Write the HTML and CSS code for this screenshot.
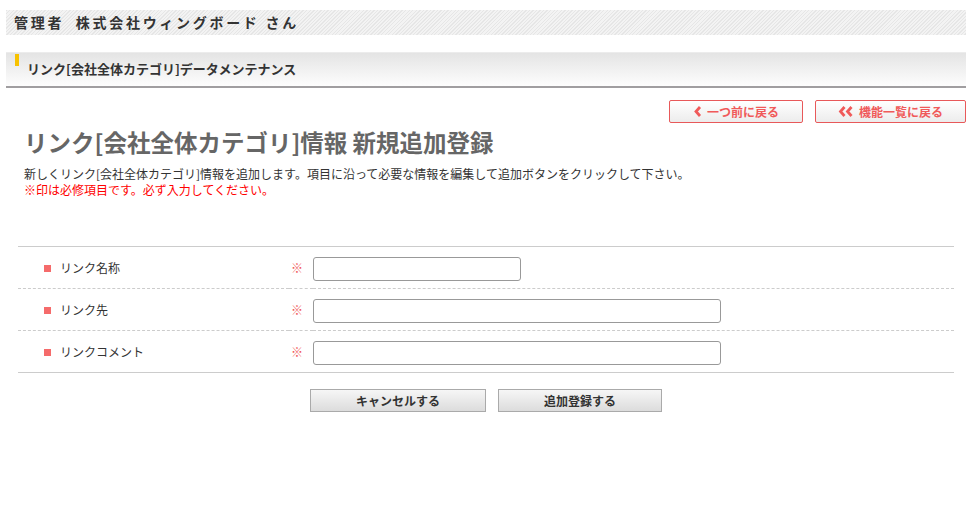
FILE: index.html
```html
<!DOCTYPE html>
<html lang="ja">
<head>
    <title>リンク[会社全体カテゴリ]情報 新規追加登録</title>
    <meta charset="UTF-8">
    <link rel="stylesheet" href="styles.css">
</head>
<body>
    <div id="wrap">
        <div class="user-bar">管理者&nbsp; 株式会社ウィングボード さん</div>

        <div class="section-bar">
            <span class="mark"></span>
            <h2>リンク[会社全体カテゴリ]データメンテナンス</h2>
        </div>

        <div class="nav-buttons">
            <a href="#" class="back-btn">
                <svg width="10" height="11" viewBox="0 0 10 11"><path d="M7 1 L3 5.5 L7 10" fill="none" stroke="#f05a5a" stroke-width="2.8"/></svg>
                一つ前に戻る
            </a>
            <a href="#" class="back-btn wide">
                <svg width="17" height="11" viewBox="0 0 17 11"><path d="M6.5 1 L2.5 5.5 L6.5 10 M13.5 1 L9.5 5.5 L13.5 10" fill="none" stroke="#f05a5a" stroke-width="2.8"/></svg>
                機能一覧に戻る
            </a>
        </div>

        <div class="content">
            <h1>リンク[会社全体カテゴリ]情報 新規追加登録</h1>
            <p class="lead">新しくリンク[会社全体カテゴリ]情報を追加します。項目に沿って必要な情報を編集して追加ボタンをクリックして下さい。</p>
            <p class="note">※印は必修項目です。必ず入力してください。</p>

            <table class="form-table">
                <tr>
                    <th><span class="sq"></span>リンク名称</th>
                    <td class="req">※</td>
                    <td><input type="text" class="short"></td>
                </tr>
                <tr>
                    <th><span class="sq"></span>リンク先</th>
                    <td class="req">※</td>
                    <td><input type="text" class="long"></td>
                </tr>
                <tr>
                    <th><span class="sq"></span>リンクコメント</th>
                    <td class="req">※</td>
                    <td><input type="text" class="long"></td>
                </tr>
            </table>

            <div class="actions">
                <button class="cancel">キャンセルする</button>
                <button class="submit">追加登録する</button>
            </div>
        </div>
    </div>
</body>
</html>
```

FILE: styles.css
```css
body {
    font-family: "Noto Sans CJK JP", "Liberation Sans", sans-serif;
    color: #333;
    background: #fff;
    margin: 0;
    padding: 0;
}

#wrap {
    width: 960px;
    margin-left: 6px;
    padding-top: 10px;
}

.user-bar {
    height: 25px;
    line-height: 24px;
    padding-left: 8px;
    font-size: 14px;
    font-weight: bold;
    letter-spacing: 2.7px;
    color: #333;
    background-color: #f3f3f3;
    background-image: repeating-linear-gradient(135deg, #e6e6e6 0, #e6e6e6 1px, transparent 1px, transparent 2.5px);
}

.section-bar {
    margin-top: 17px;
    height: 33px;
    border-top: 1px solid #ececec;
    border-bottom: 2px solid #a09ea0;
    background: linear-gradient(#e4e4e4, #fdfdfd);
    position: relative;
}

.section-bar .mark {
    position: absolute;
    left: 9px;
    top: 1px;
    width: 4px;
    height: 12px;
    background: #f7c200;
}

.section-bar h2 {
    margin: 0;
    padding-left: 21px;
    line-height: 29px;
    padding-top: 1px;
    font-size: 13px;
    font-weight: bold;
    color: #333;
}

.nav-buttons {
    display: flex;
    justify-content: flex-end;
    gap: 12px;
    margin-top: 12px;
}

.back-btn {
    display: flex;
    align-items: center;
    justify-content: center;
    gap: 4px;
    width: 132px;
    height: 21px;
    border: 1px solid #e8595a;
    border-radius: 2px;
    background: linear-gradient(#fff, #ececec);
    color: #f05a5a;
    font-size: 12px;
    font-weight: bold;
    text-decoration: none;
}

.back-btn.wide {
    width: 149px;
}

.content {
    padding-left: 12px;
    padding-right: 12px;
}

h1 {
    margin: 3px 0 0 6px;
    font-size: 23.5px;
    line-height: 32px;
    font-weight: bold;
    color: #666;
}

.lead {
    margin: 8px 0 0 6px;
    font-size: 12px;
    line-height: 16px;
}

.note {
    margin: 0 0 0 6px;
    font-size: 12px;
    line-height: 16px;
    color: #f00;
}

.form-table {
    width: 100%;
    table-layout: fixed;
    margin-top: 48px;
    border-collapse: collapse;
    border-top: 1px solid #ccc;
    border-bottom: 1px solid #ccc;
}

.form-table tr + tr {
    border-top: 1px dashed #ccc;
}

.form-table th {
    width: 245px;
    height: 41px;
    padding: 0 0 0 26px;
    text-align: left;
    font-size: 12px;
    font-weight: normal;
    color: #333;
}

.form-table .sq {
    display: inline-block;
    width: 7px;
    height: 7px;
    margin-right: 9px;
    background: #f56b6b;
    vertical-align: 1px;
}

.form-table td {
    padding: 0;
}

.form-table td.req {
    width: 22px;
    padding-left: 2px;
    color: #f05a5a;
    font-size: 12px;
}

.form-table input {
    box-sizing: border-box;
    height: 24px;
    border: 1px solid #999;
    border-radius: 3px;
    padding: 2px 4px;
}

.form-table input.short {
    width: 208px;
}

.form-table input.long {
    width: 408px;
}

.actions {
    display: flex;
    justify-content: center;
    gap: 12px;
    margin-top: 16px;
}

.actions button {
    height: 23px;
    border: 1px solid #aaa;
    border-radius: 0;
    background: linear-gradient(#f6f6f6, #dcdcdc);
    font-family: "Noto Sans CJK JP", "Liberation Sans", sans-serif;
    font-size: 12px;
    font-weight: bold;
    color: #333;
    cursor: pointer;
}

.actions .cancel {
    width: 176px;
}

.actions .submit {
    width: 164px;
}
```
